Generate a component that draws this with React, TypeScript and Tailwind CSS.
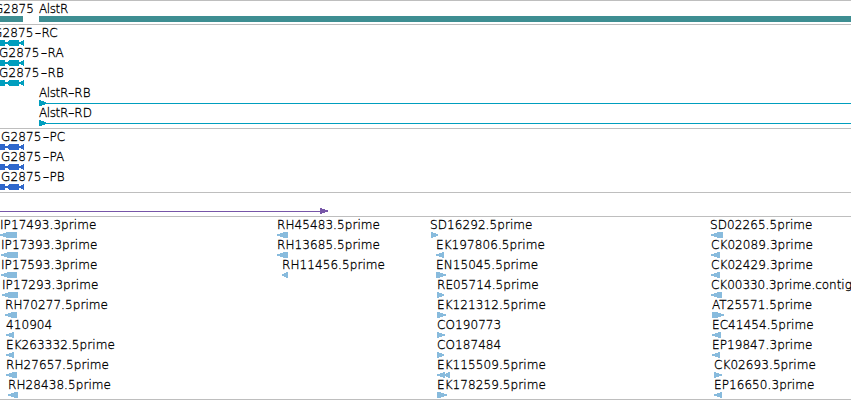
import React from "react";

type Feature = {
  label: string;
  x: number;
  start?: number;
  width: number;
  shape: "left" | "right" | "exons" | "intron" | "double";
};

const transcripts: Feature[] = [
  { label: "G2875-RC", x: -7, start: 0, width: 24, shape: "exons" },
  { label: "G2875-RA", x: -1, start: 0, width: 24, shape: "exons" },
  { label: "G2875-RB", x: -1, start: 0, width: 24, shape: "exons" },
  { label: "AlstR-RB", x: 39, start: 39, width: 812, shape: "intron" },
  { label: "AlstR-RD", x: 39, start: 39, width: 812, shape: "intron" },
];

const proteins: Feature[] = [
  { label: "G2875-PC", x: 1, start: 0, width: 24, shape: "exons" },
  { label: "G2875-PA", x: 1, start: 0, width: 24, shape: "exons" },
  { label: "G2875-PB", x: 1, start: 0, width: 24, shape: "exons" },
];

const columns: { width: string; features: Feature[] }[] = [
  {
    width: "w-[270px]",
    features: [
      { label: "IP17493.3prime", x: 0, start: 0, width: 17, shape: "left" },
      { label: "IP17393.3prime", x: 1, start: 1, width: 17, shape: "left" },
      { label: "IP17593.3prime", x: 1, start: 1, width: 16, shape: "left" },
      { label: "IP17293.3prime", x: 2, start: 2, width: 16, shape: "left" },
      { label: "RH70277.5prime", x: 5, start: 5, width: 12, shape: "left" },
      { label: "410904", x: 6, start: 6, width: 8, shape: "left" },
      { label: "EK263332.5prime", x: 6, start: 6, width: 8, shape: "left" },
      { label: "RH27657.5prime", x: 6, start: 6, width: 11, shape: "left" },
      { label: "RH28438.5prime", x: 8, start: 8, width: 10, shape: "left" },
    ],
  },
  {
    width: "w-[150px]",
    features: [
      { label: "RH45483.5prime", x: 7, start: 7, width: 11, shape: "left" },
      { label: "RH13685.5prime", x: 7, start: 7, width: 11, shape: "left" },
      { label: "RH11456.5prime", x: 12, start: 12, width: 6, shape: "left" },
    ],
  },
  {
    width: "w-[280px]",
    features: [
      { label: "SD16292.5prime", x: 10, start: 11, width: 7, shape: "right" },
      { label: "EK197806.5prime", x: 16, start: 16, width: 8, shape: "left" },
      { label: "EN15045.5prime", x: 16, start: 16, width: 10, shape: "right" },
      { label: "RE05714.5prime", x: 17, start: 17, width: 7, shape: "right" },
      { label: "EK121312.5prime", x: 17, start: 17, width: 9, shape: "right" },
      { label: "CO190773", x: 17, start: 17, width: 8, shape: "right" },
      { label: "CO187484", x: 17, start: 17, width: 7, shape: "right" },
      { label: "EK115509.5prime", x: 17, start: 17, width: 13, shape: "double" },
      { label: "EK178259.5prime", x: 17, start: 17, width: 10, shape: "right" },
    ],
  },
  {
    width: "w-[151px]",
    features: [
      { label: "SD02265.5prime", x: 10, start: 11, width: 12, shape: "left" },
      { label: "CK02089.3prime", x: 11, start: 11, width: 9, shape: "left" },
      { label: "CK02429.3prime", x: 11, start: 11, width: 9, shape: "left" },
      { label: "CK00330.3prime.contig", x: 11, start: 11, width: 11, shape: "left" },
      { label: "AT25571.5prime", x: 12, start: 12, width: 12, shape: "right" },
      { label: "EC41454.5prime", x: 12, start: 12, width: 9, shape: "left" },
      { label: "EP19847.3prime", x: 12, start: 12, width: 8, shape: "left" },
      { label: "CK02693.5prime", x: 14, start: 14, width: 8, shape: "right" },
      { label: "EP16650.3prime", x: 14, start: 14, width: 8, shape: "left" },
    ],
  },
];

function Glyph({ shape, width, start = 0 }: Feature) {
  const w = width;
  const h = Math.min(8, w);
  let d = "";
  if (shape === "left") d = `M0 2.5L${h - 1} 0H${w}V6H${h - 1}L0 3.6Z`;
  if (shape === "right") d = `M0 0H${w - h + 1}L${w} 2.5V3.6L${w - h + 1} 6H0Z`;
  if (shape === "double") d = "M0 2.5L7 0H8V6H7L0 3.6ZM7 2.5L12 0H13V6H12L7 3.6Z";
  if (shape === "exons") d = "M0 0H5V2H7L10 0H19V2H20L24 0V6L20 4H19V6H10L7 4H5V6H0Z";
  return (
    <svg className="block shrink-0" style={{ marginLeft: start }} width={w} height={6} fill="currentColor" shapeRendering="crispEdges">
      {shape === "intron" ? <path d={`M0 0H1L7 2.5V3H${w}V4H7L1 6H0Z`} /> : <path d={d} />}
    </svg>
  );
}

// Transcript and protein names carry a wide hyphen between gene and suffix.
function Label({ text }: { text: string }) {
  const [gene, suffix] = text.split("-");
  let tracking = "tracking-[0.08px]";
  if (gene === "AlstR") tracking = "tracking-[-0.4px]";
  if (gene.endsWith("contig")) tracking = "tracking-[-0.03px]";
  if (gene === "G2875") tracking = "tracking-[0.15px]";
  const dash = gene === "AlstR" ? "w-[6.5px]" : "w-2";
  return (
    <>
      <span className={tracking}>{gene}</span>
      {suffix && (
        <>
          <span className={`inline-block origin-center scale-x-150 text-center ${dash}`}>-</span>
          <span>{suffix}</span>
        </>
      )}
    </>
  );
}

function Row(props: Feature) {
  return (
    <div className="h-5">
      <div className="h-[15px] whitespace-nowrap leading-[17px] text-black" style={{ marginLeft: props.x }}>
        <Label text={props.label} />
      </div>
      <Glyph {...props} />
    </div>
  );
}

export default function App() {
  return (
    <main className="flex h-[400px] w-[851px] flex-col overflow-hidden bg-white font-['DejaVu_Sans_Light','DejaVu_Sans',sans-serif] text-[12px] font-extralight [-webkit-text-stroke:0.3px_#000]">
      <section className="h-6 border-t border-[#bebebe] text-[#3e8e92]">
        <div className="flex h-[15px] leading-[17px] text-black">
          <span className="-ml-[6px] w-[45px]">G2875</span>
          <Label text="AlstR" />
        </div>
        <div className="flex gap-4">
          <div className="h-1.5 w-[23px] bg-current" />
          <div className="h-1.5 grow bg-current" />
        </div>
      </section>
      <section className="h-[104px] border-t border-[#bebebe] text-[#009ebe]">
        {transcripts.map((f) => <Row key={f.label} {...f} />)}
      </section>
      <section className="h-16 border-t border-[#bebebe] text-[#3068cc]">
        {proteins.map((f) => <Row key={f.label} {...f} />)}
      </section>
      <section className="h-6 border-t border-[#bebebe] pt-[15px] text-[#7756a8]">
        <svg className="block" width="329" height="6" fill="currentColor" shapeRendering="crispEdges">
          <path d="M0 3H320V0H321L328 2.5V3.5L321 6H320V4H0Z" />
        </svg>
      </section>
      <section className="flex h-[184px] border-y border-[#bebebe] text-[#88bbdd]">
        {columns.map((c) => (
          <div key={c.width} className={c.width}>
            {c.features.map((f) => <Row key={f.label} {...f} />)}
          </div>
        ))}
      </section>
    </main>
  );
}
